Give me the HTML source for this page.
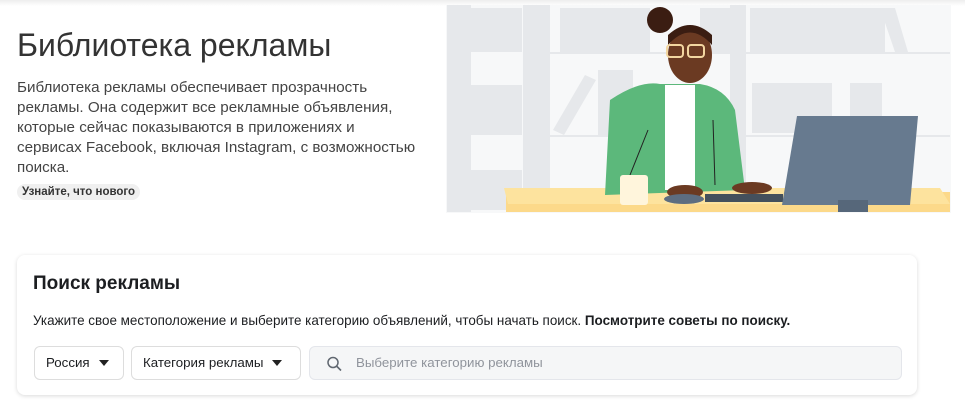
<!DOCTYPE html>
<html><head><meta charset="utf-8"><style>
body{margin:0;width:965px;height:414px;background:#fff;font-family:"Liberation Sans",Arial,sans-serif;position:relative;overflow:hidden;color:#1c1e21}
.top{position:absolute;left:0;top:0;width:965px;height:6px;background:linear-gradient(#eee,#fff)}
h1{position:absolute;left:17px;top:27px;margin:0;font-size:32px;font-weight:normal;color:#333}
.p{position:absolute;left:17px;top:78px;white-space:nowrap;font-size:15.2px;line-height:20px;color:#444}
.badge{position:absolute;left:17px;top:184px;padding:2px 5px;background:#f0f0f0;border-radius:9px;font-size:11.5px;font-weight:bold;color:#333}
.card{position:absolute;left:17px;top:255px;width:900px;height:140px;border-radius:8px;box-shadow:0 1px 4px rgba(0,0,0,.15);background:#fff}
.card h2{position:absolute;left:16px;top:18px;margin:0;font-size:19px;font-weight:bold;color:#1c1e21}
.card .t{position:absolute;left:16px;top:58px;font-size:13.45px;color:#1c1e21}
.sel{position:absolute;top:91px;border:1px solid #ddd;border-radius:6px;font-size:13.3px;line-height:32px;padding-left:11px;box-sizing:border-box;height:34px}
.tri{display:inline-block;width:0;height:0;border-left:5px solid transparent;border-right:5px solid transparent;border-top:6px solid #222;margin-left:9px;vertical-align:1px}
.srch{position:absolute;left:292px;top:91px;width:593px;height:34px;background:#f5f6f7;border:1px solid #e4e6eb;border-radius:6px;box-sizing:border-box;font-size:13.3px;color:#90949c;line-height:32px;padding-left:46px}
</style></head><body>
<div class="top"></div>
<svg style="position:absolute;left:446px;top:5px" width="505" height="208" viewBox="446 5 505 208">
<rect x="446" y="5" width="505" height="208" fill="#f7f8f9"/>
<g fill="#e6e8eb">
<rect x="447" y="5" width="24" height="207"/><rect x="523" y="5" width="27" height="185"/><rect x="730" y="5" width="16" height="185"/>
<rect x="470" y="8" width="52" height="44"/><rect x="560" y="8" width="60" height="44"/><rect x="620" y="8" width="30" height="44"/><rect x="700" y="8" width="30" height="44"/>
<rect x="750" y="8" width="135" height="44"/><polygon points="880,8 895,8 908,52 895,52"/>
<rect x="470" y="85" width="52" height="50"/><rect x="470" y="170" width="52" height="40"/>
<rect x="598" y="70" width="35" height="65"/><polygon points="553,130 585,75 596,80 564,135"/>
<rect x="752" y="83" width="80" height="50"/><rect x="850" y="83" width="32" height="50"/>
<rect x="550" y="52" width="400" height="2"/><rect x="550" y="135" width="400" height="2"/>
</g>
<rect x="506" y="192" width="444" height="20" fill="#fcd98a"/>
<polygon points="504,188 940,188 950,204 508,204" fill="#fde39e"/>
<path d="M610 100 Q640 80 660 84 L700 84 Q725 88 735 110 L745 190 L605 195 Z" fill="#5cb87b"/>
<rect x="665" y="85" width="30" height="105" fill="#fff"/>
<path d="M648 130 L630 175 M713 120 L715 185" stroke="#222" stroke-width="1"/>
<circle cx="660" cy="20" r="13" fill="#3b1d12"/>
<ellipse cx="690" cy="55" rx="22" ry="28" fill="#6b3a22"/>
<path d="M668 45 Q690 20 712 45 L712 35 Q690 15 668 35Z" fill="#3b1d12"/>
<rect x="667" y="45" width="16" height="12" rx="3" fill="none" stroke="#f3d6a0" stroke-width="2"/>
<rect x="688" y="45" width="16" height="12" rx="3" fill="none" stroke="#f3d6a0" stroke-width="2"/>
<ellipse cx="685" cy="192" rx="18" ry="7" fill="#6b3a22"/>
<ellipse cx="752" cy="188" rx="20" ry="6" fill="#6b3a22"/>
<rect x="705" y="194" width="78" height="8" fill="#44505c"/>
<ellipse cx="684" cy="199" rx="20" ry="5" fill="#5d6d80"/>
<rect x="620" y="175" width="28" height="30" rx="3" fill="#fff5dc"/>
<polygon points="797,116 918,116 910,205 782,205" fill="#677a8f"/>
<rect x="838" y="200" width="30" height="12" fill="#56677a"/>
</svg>
<h1>Библиотека рекламы</h1>
<div class="p">Библиотека рекламы обеспечивает прозрачность<br>рекламы. Она содержит все рекламные объявления,<br>которые сейчас показываются в приложениях и<br>сервисах Facebook, включая Instagram, с возможностью<br>поиска.</div>
<div class="badge">Узнайте, что нового</div>
<div class="card">
<h2>Поиск рекламы</h2>
<div class="t">Укажите свое местоположение и выберите категорию объявлений, чтобы начать поиск. <b>Посмотрите советы по поиску.</b></div>
<div class="sel" style="left:17px;width:90px">Россия<span class="tri"></span></div>
<div class="sel" style="left:114px;width:170px">Категория рекламы<span class="tri"></span></div>
<div class="srch"><svg style="position:absolute;left:16px;top:9px" width="16" height="16" viewBox="0 0 16 16"><circle cx="7" cy="6.5" r="5" fill="none" stroke="#606770" stroke-width="1.5"/><path d="M10.5 10 L15 14.5" stroke="#606770" stroke-width="1.6"/></svg>Выберите категорию рекламы</div>
</div>
</body></html>
